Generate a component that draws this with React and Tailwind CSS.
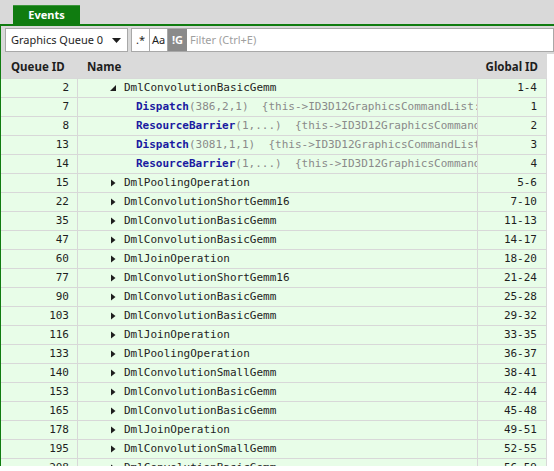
import React from "react";

const ui = { fontFamily: '"Noto Sans", "Open Sans", sans-serif' };
const mono = { fontFamily: '"DejaVu Sans Mono", "Liberation Mono", monospace' };

const rows = [
  { q: 2, name: "DmlConvolutionBasicGemm", g: "1-4", open: true },
  { q: 7, call: "Dispatch", args: "(386,2,1)", tail: "  {this->ID3D12GraphicsCommandList::", g: "1" },
  { q: 8, call: "ResourceBarrier", args: "(1,...)", tail: "  {this->ID3D12GraphicsCommandList", g: "2" },
  { q: 13, call: "Dispatch", args: "(3081,1,1)", tail: "  {this->ID3D12GraphicsCommandList::", g: "3" },
  { q: 14, call: "ResourceBarrier", args: "(1,...)", tail: "  {this->ID3D12GraphicsCommandList", g: "4" },
  { q: 15, name: "DmlPoolingOperation", g: "5-6" },
  { q: 22, name: "DmlConvolutionShortGemm16", g: "7-10" },
  { q: 35, name: "DmlConvolutionBasicGemm", g: "11-13" },
  { q: 47, name: "DmlConvolutionBasicGemm", g: "14-17" },
  { q: 60, name: "DmlJoinOperation", g: "18-20" },
  { q: 77, name: "DmlConvolutionShortGemm16", g: "21-24" },
  { q: 90, name: "DmlConvolutionBasicGemm", g: "25-28" },
  { q: 103, name: "DmlConvolutionBasicGemm", g: "29-32" },
  { q: 116, name: "DmlJoinOperation", g: "33-35" },
  { q: 133, name: "DmlPoolingOperation", g: "36-37" },
  { q: 140, name: "DmlConvolutionSmallGemm", g: "38-41" },
  { q: 153, name: "DmlConvolutionBasicGemm", g: "42-44" },
  { q: 165, name: "DmlConvolutionBasicGemm", g: "45-48" },
  { q: 178, name: "DmlJoinOperation", g: "49-51" },
  { q: 195, name: "DmlConvolutionSmallGemm", g: "52-55" },
  { q: 208, name: "DmlConvolutionBasicGemm", g: "56-59" },
];

function Toggle({ open }) {
  if (open) {
    return (
      <svg width="8" height="8" viewBox="0 0 8 8" className="mr-[7px] shrink-0">
        <path d="M7 1 L7 7 L1 7 Z" fill="#1e1e1e" />
      </svg>
    );
  }
  return (
    <svg width="8" height="8" viewBox="0 0 8 8" className="mr-[7px] shrink-0">
      <path d="M2 0.5 L6.5 4 L2 7.5 Z" fill="#1e1e1e" />
    </svg>
  );
}

function Row({ r }) {
  return (
    <div className="flex h-[19px] border-b border-[#d8d8d8] bg-[#e8fde8] text-[11px] leading-[18px] text-[#1e1e1e]" style={mono}>
      <div className="w-[77px] shrink-0 border-r border-[#d8d8d8] pr-[8px] text-right">{r.q}</div>
      <div className="w-[400px] shrink-0 overflow-hidden border-r border-[#d8d8d8]">
        {r.call ? (
          <div className="whitespace-pre pl-[58px]">
            <span className="font-bold text-[#1a1aa0]">{r.call}</span>
            <span className="text-[#8a8a8a]">{r.args}</span>
            <span className="text-[#8a8a8a]">{r.tail}</span>
          </div>
        ) : (
          <div className="flex items-center pl-[31px]">
            <Toggle open={r.open} />
            <span>{r.name}</span>
          </div>
        )}
      </div>
      <div className="w-[69px] shrink-0 border-r border-[#d8d8d8] pr-[9px] text-right">{r.g}</div>
    </div>
  );
}

export default function App() {
  return (
    <div className="relative h-[471px] w-[554px] overflow-hidden bg-white" style={ui}>
      {/* tab strip */}
      <div className="flex h-[24px] items-end bg-[#d9d9d9] pl-[13px]">
        <div className="flex h-[19px] w-[67px] items-center justify-center border-t border-[#3c963c] bg-[#107c10] text-[11px] font-bold text-white">
          Events
        </div>
      </div>

      <div className="flex h-[442px] flex-col border-l border-t-2 border-[#107c10]">
        {/* toolbar */}
        <div className="flex h-[28px] shrink-0 items-center gap-[3px] bg-[#d9d9d9] pl-[4px]">
          <div className="flex h-[24px] w-[123px] items-center justify-between border border-[#a8a8a8] bg-white pl-[5px] pr-[6px] text-[11px] text-[#1e1e1e]">
            <span>Graphics Queue 0</span>
            <svg width="9" height="5" viewBox="0 0 9 5">
              <path d="M0 0 L9 0 L4.5 5 Z" fill="#1e1e1e" />
            </svg>
          </div>
          <div className="flex h-[24px] flex-1 items-stretch border border-[#a8a8a8] bg-white text-[11px]">
            <div className="flex w-[18px] items-center justify-center border-r border-[#a8a8a8] text-[#1e1e1e]">.*</div>
            <div className="flex w-[18px] items-center justify-center border-r border-[#a8a8a8] text-[#1e1e1e]">Aa</div>
            <div className="flex w-[19px] items-center justify-center bg-[#8a8a8a] font-bold text-white">!G</div>
            <div className="flex items-center pl-[3px] text-[#a0a0a0]">Filter (Ctrl+E)</div>
          </div>
        </div>

        {/* table */}
        <div className="flex-1 overflow-hidden">
          <div className="w-[546px]">
            <div className="flex h-[25px] border-b border-[#d8d8d8] bg-[#dadada] pt-[1px] text-[11.5px] font-bold text-[#1e1e1e]">
              <div className="flex w-[77px] shrink-0 items-center pl-[10px]">Queue ID</div>
              <div className="flex w-[400px] shrink-0 items-center pl-[9px]">Name</div>
              <div className="flex w-[69px] shrink-0 items-center justify-end pr-[9px]">Global ID</div>
            </div>
            {rows.map((r, i) => (
              <Row key={i} r={r} />
            ))}
          </div>
        </div>
      </div>
    </div>
  );
}
